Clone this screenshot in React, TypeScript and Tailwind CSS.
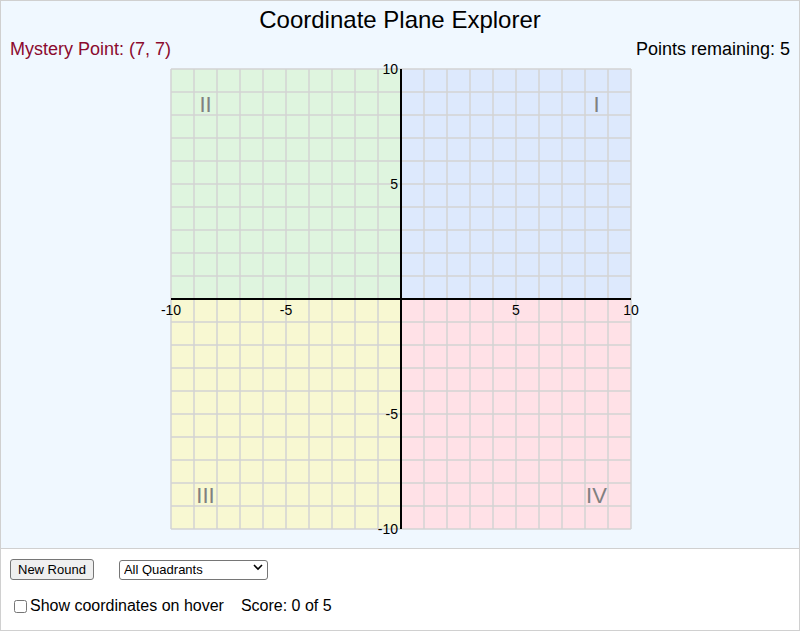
import React, { useState } from "react";

const ORIGIN_X = 400;
const ORIGIN_Y = 299;
const CELL = 23;

function toX(v: number) {
  return ORIGIN_X + v * CELL;
}

function toY(v: number) {
  return ORIGIN_Y - v * CELL;
}

function Plane() {
  const ticks = Array.from({ length: 21 }, (_, i) => i - 10);
  const quadrants = [
    { label: "I", x: 8.5, y: 8.5 },
    { label: "II", x: -8.5, y: 8.5 },
    { label: "III", x: -8.5, y: -8.5 },
    { label: "IV", x: 8.5, y: -8.5 },
  ];

  return (
    <svg width="800" height="480" viewBox="0 60 800 480" className="block">
      <rect x={170} y={69} width={230} height={230} fill="#dff5df" />
      <rect x={400} y={69} width={230} height={230} fill="#dde9fd" />
      <rect x={170} y={299} width={230} height={230} fill="#f8f8d2" />
      <rect x={400} y={299} width={230} height={230} fill="#ffe1e7" />

      {ticks.map((t) => (
        <g key={t}>
          <line x1={toX(t)} y1={69} x2={toX(t)} y2={529} stroke="#d3d3d3" strokeWidth={1.5} />
          <line x1={170} y1={toY(t)} x2={630} y2={toY(t)} stroke="#d3d3d3" strokeWidth={1.5} />
        </g>
      ))}

      <line x1={170} y1={ORIGIN_Y} x2={630} y2={ORIGIN_Y} stroke="#000" strokeWidth={2} />
      <line x1={ORIGIN_X} y1={69} x2={ORIGIN_X} y2={529} stroke="#000" strokeWidth={2} />

      <g fontFamily="'Liberation Sans', Arial, sans-serif" fontSize="14" fill="#000">
        {[-10, -5, 5, 10].map((v) => (
          <text key={"x" + v} x={toX(v)} y={ORIGIN_Y + 16} textAnchor="middle">
            {v}
          </text>
        ))}
        {[-10, -5, 5, 10].map((v) => (
          <text key={"y" + v} x={ORIGIN_X - 3} y={toY(v) + 5} textAnchor="end">
            {v}
          </text>
        ))}
      </g>

      <g fontFamily="'Liberation Sans', Arial, sans-serif" fontSize="22" fill="#808080">
        {quadrants.map((q) => (
          <text key={q.label} x={toX(q.x)} y={toY(q.y) + 8} textAnchor="middle">
            {q.label}
          </text>
        ))}
      </g>
    </svg>
  );
}

export default function App() {
  const [showCoords, setShowCoords] = useState(false);

  return (
    <div className="w-[800px] h-[632px] bg-white font-['Liberation_Sans',Arial,sans-serif] text-black">
      <div className="h-[549px] border border-[#d0d0d0] bg-[#f0f8ff]">
        <h1 className="h-[38px] pt-[5px] text-center text-[24px] leading-[28px]">
          Coordinate Plane Explorer
        </h1>
        <div className="flex h-[21px] items-center justify-between px-[9px] text-[18px]">
          <span className="text-[#8b0a2e]">Mystery Point: (7, 7)</span>
          <span>Points remaining: 5</span>
        </div>
        <Plane />
      </div>

      <div className="h-[82px] border border-t-0 border-[#d0d0d0] px-[9px] pt-[8px]">
        <div className="flex items-center gap-[25px]">
          <button className="h-[21px] rounded-[3px] border border-[#767676] bg-[#efefef] px-[7px] text-[13px] leading-none">
            New Round
          </button>
          <div className="relative">
            <select className="h-[20px] w-[149px] appearance-none rounded-[3px] border border-[#767676] bg-white pl-[4px] text-[13px] leading-none">
              <option>All Quadrants</option>
              <option>Quadrant I</option>
              <option>Quadrant II</option>
              <option>Quadrant III</option>
              <option>Quadrant IV</option>
            </select>
            <svg
              className="pointer-events-none absolute right-[5px] top-[6px]"
              width="10"
              height="8"
              viewBox="0 0 10 8"
            >
              <path d="M1 2 L5 6 L9 2" fill="none" stroke="#000" strokeWidth="1.6" />
            </svg>
          </div>
        </div>
        <div className="mt-[13px] flex items-center text-[16px]">
          <label className="flex items-center">
            <input
              type="checkbox"
              checked={showCoords}
              onChange={(e) => setShowCoords(e.target.checked)}
              className="ml-[4px] mr-[3px] h-[13px] w-[13px]"
            />
            Show coordinates on hover
          </label>
          <span className="ml-[17px]">Score: 0 of 5</span>
        </div>
      </div>
    </div>
  );
}
